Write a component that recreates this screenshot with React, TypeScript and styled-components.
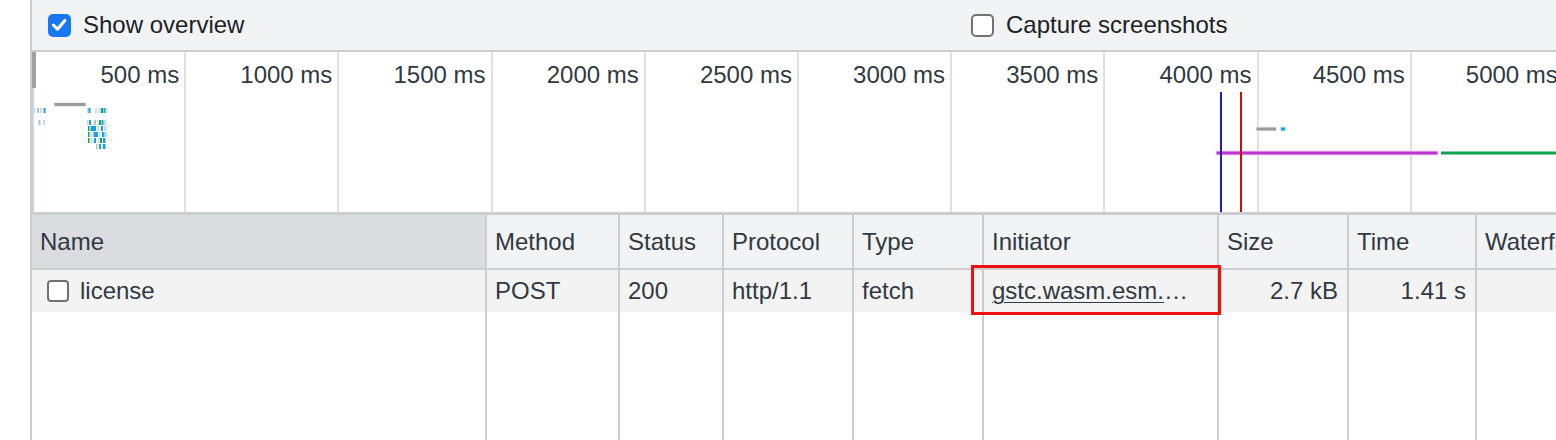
import React from "react";
import styled, { createGlobalStyle } from "styled-components";

const GlobalStyle = createGlobalStyle`
  html, body { margin: 0; padding: 0; background: #ffffff; }
  body { font-family: "Liberation Sans", Arial, Helvetica, sans-serif; overflow: hidden; }
  *, *::before, *::after { box-sizing: border-box; }
`;

const Page = styled.div`
  display: flex;
  width: 1556px;
  height: 440px;
  padding-left: 30px;
  background: #ffffff;
  overflow: hidden;
`;

const Panel = styled.div`
  flex: 1;
  min-width: 0;
  display: flex;
  flex-direction: column;
  border-left: 2px solid #cbcdd1;
  overflow: hidden;
`;

const Toolbar = styled.div`
  flex: 0 0 52px;
  display: grid;
  grid-template-columns: 923px 1fr;
  align-items: center;
  padding-left: 16px;
  background: #f1f3f4;
  border-bottom: 2px solid #cbcdd1;
`;

const Option = styled.label`
  display: flex;
  align-items: center;
  gap: 12px;
  font-size: 24px;
  line-height: 24px;
  color: #202124;
  white-space: nowrap;
`;

const CheckBox = styled.span<{ $checked?: boolean; $size: number; $radius: number }>`
  flex: 0 0 auto;
  display: inline-flex;
  align-items: center;
  justify-content: center;
  width: ${(p) => p.$size}px;
  height: ${(p) => p.$size}px;
  border-radius: ${(p) => p.$radius}px;
  background: ${(p) => (p.$checked ? "#1877f2" : "#ffffff")};
  border: ${(p) => (p.$checked ? "none" : "2px solid #727272")};
`;

const Overview = styled.div`
  flex: 0 0 163px;
  position: relative;
  display: flex;
  padding-left: 1px;
  background: #ffffff;
  border-bottom: 3px solid #cbcdd1;
  overflow: hidden;
`;

const Tick = styled.div`
  flex: 0 0 153.2px;
  border-right: 2px solid #e0e0e0;
  padding: 11px 5px 0 0;
  text-align: right;
  font-size: 24px;
  line-height: 24px;
  color: #303942;
  white-space: nowrap;
`;

const Marks = styled.svg`
  position: absolute;
  left: 0;
  top: 0;
  pointer-events: none;
`;

const Table = styled.div`
  flex: 1;
  min-height: 0;
  display: grid;
  grid-template-columns: 453px 133px 104px 130px 130px 235px 130px 128px 1fr;
  grid-template-rows: 55px 42px 1fr;
`;

const HeadCell = styled.div<{ $active?: boolean; $first?: boolean }>`
  display: flex;
  align-items: center;
  min-width: 0;
  padding: 0 8px;
  background: ${(p) => (p.$active ? "#dadce0" : "#f1f3f4")};
  border-bottom: 2px solid #cbcdd1;
  border-left: ${(p) => (p.$first ? "none" : "2px solid #cbcdd1")};
  font-size: 24px;
  line-height: 24px;
  color: #303942;
  white-space: nowrap;
  overflow: hidden;
`;

const Cell = styled.div<{ $right?: boolean; $first?: boolean }>`
  position: relative;
  display: flex;
  align-items: center;
  justify-content: ${(p) => (p.$right ? "flex-end" : "flex-start")};
  min-width: 0;
  padding: ${(p) => (p.$first ? "0 8px 0 15px" : p.$right ? "0 9px 0 8px" : "0 8px")};
  gap: 11px;
  background: #f3f3f3;
  border-left: ${(p) => (p.$first ? "none" : "2px solid #cbcdd1")};
  font-size: 24px;
  line-height: 24px;
  color: #303942;
  white-space: nowrap;
`;

const Filler = styled.div<{ $first?: boolean }>`
  background: #ffffff;
  border-left: ${(p) => (p.$first ? "none" : "2px solid #cbcdd1")};
`;

const Link = styled.span`
  text-decoration: underline;
  text-underline-offset: 3px;
  text-decoration-thickness: 1px;
`;

const Highlight = styled.div`
  position: absolute;
  z-index: 2;
  left: -13px;
  top: -5px;
  width: 250px;
  height: 50px;
  border: 3px solid #ee1111;
  pointer-events: none;
`;

const Check = () => (
  <svg width="24" height="24" viewBox="0 0 24 24">
    <path d="M5.6 12.2 L9.9 16.4 L17.6 7.2" fill="none" stroke="#ffffff" strokeWidth="3.2" strokeLinecap="round" strokeLinejoin="round" />
  </svg>
);

const LB = "#b9def5";
const BL = "#1a9fe3";
const GR = "#1ea44a";
const GY = "#bdbdbd";

type Mark = [number, number, number, string];
const marks: Mark[] = [
  // row 1
  [1, 56, 2, LB], [5, 56, 2, GY], [8, 56, 2, LB], [11.5, 56, 2, BL],
  [55, 56, 1.5, LB], [56.5, 56, 2, BL], [63, 56, 2, "#dddddd"], [66.5, 56, 2, LB], [69, 56, 2, GR], [71.5, 56, 2, BL], [74, 56, 1.5, LB],
  // row 2
  [6.5, 68, 2, GY], [11, 68, 2, LB],
  [55, 68, 1.5, LB], [57, 68, 2, BL], [62, 68, 2, GY], [65, 68, 1.5, "#dddddd"], [67, 68, 2, GR], [69.5, 68, 2, BL], [72, 68, 2, LB],
  // row 3
  [56, 74, 1.5, GR], [58.5, 74, 5.5, BL], [65.5, 74, 1.5, LB], [69, 74, 2, BL], [72, 74, 2.5, LB],
  // row 4
  [56, 80, 1.5, GR], [59, 80, 1.5, LB], [61.5, 80, 4.5, BL], [67, 80, 1.5, LB], [70, 80, 2.5, BL], [73, 80, 2, LB],
  // row 5
  [56, 86, 1.5, GR], [59, 86, 1.5, LB], [62, 86, 2, BL], [66, 86, 1.5, LB], [68, 86, 2, GR], [71, 86, 2.5, BL],
  // row 6
  [64, 92, 1.5, GY], [67, 92, 2, BL], [69.5, 92, 1, LB], [71, 92, 2.5, BL],
];

const ticks = ["500 ms", "1000 ms", "1500 ms", "2000 ms", "2500 ms", "3000 ms", "3500 ms", "4000 ms", "4500 ms", "5000 ms"];

const columns = ["Name", "Method", "Status", "Protocol", "Type", "Initiator", "Size", "Time", "Waterfall"];

export default function App() {
  return (
    <>
      <GlobalStyle />
      <Page>
        <Panel>
          <Toolbar>
            <Option>
              <CheckBox $checked $size={23} $radius={5}>
                <Check />
              </CheckBox>
              Show overview
            </Option>
            <Option>
              <CheckBox $size={23} $radius={5} />
              Capture screenshots
            </Option>
          </Toolbar>

          <Overview>
            {ticks.map((t) => (
              <Tick key={t}>{t}</Tick>
            ))}
            <Marks width="1524" height="160" viewBox="0 0 1524 160">
              <rect x="0" y="0" width="4" height="36" fill="#a0a0a0" />
              <rect x="0" y="36" width="2" height="124" fill="#c9d3e8" />
              <rect x="22" y="50.5" width="32" height="4" fill="#9b9b9b" stroke="#eeeeee" strokeWidth="1" />
              {marks.map(([x, y, w, c], i) => (
                <rect key={i} x={x} y={y} width={w} height={5} fill={c} />
              ))}
              <rect x="1224" y="75" width="20.5" height="4" fill="#9a9a9a" stroke="#ededed" strokeWidth="1" />
              <rect x="1248.5" y="75" width="5" height="4" fill="#1aa1e8" stroke="#d5ecfa" strokeWidth="1" />
              <rect x="1184" y="99" width="222" height="4" fill="#bc33cf" stroke="#f2d6f6" strokeWidth="1" />
              <rect x="1408.5" y="99" width="200" height="4" fill="#0fa34a" stroke="#ffffff" strokeWidth="1" />
              <rect x="1188" y="40" width="2" height="120" fill="#2421a6" />
              <rect x="1208" y="40" width="2" height="120" fill="#d20a0a" />
            </Marks>
          </Overview>

          <Table>
            {columns.map((c, i) => (
              <HeadCell key={c} $first={i === 0} $active={i === 0}>
                {c}
              </HeadCell>
            ))}

            <Cell $first>
              <CheckBox $size={22} $radius={4} />
              license
            </Cell>
            <Cell>POST</Cell>
            <Cell>200</Cell>
            <Cell>http/1.1</Cell>
            <Cell>fetch</Cell>
            <Cell>
              <span>
                <Link>gstc.wasm.esm.</Link>…
              </span>
              <Highlight />
            </Cell>
            <Cell $right>2.7 kB</Cell>
            <Cell $right>1.41 s</Cell>
            <Cell />

            {columns.map((c, i) => (
              <Filler key={"f" + c} $first={i === 0} />
            ))}
          </Table>
        </Panel>
      </Page>
    </>
  );
}
